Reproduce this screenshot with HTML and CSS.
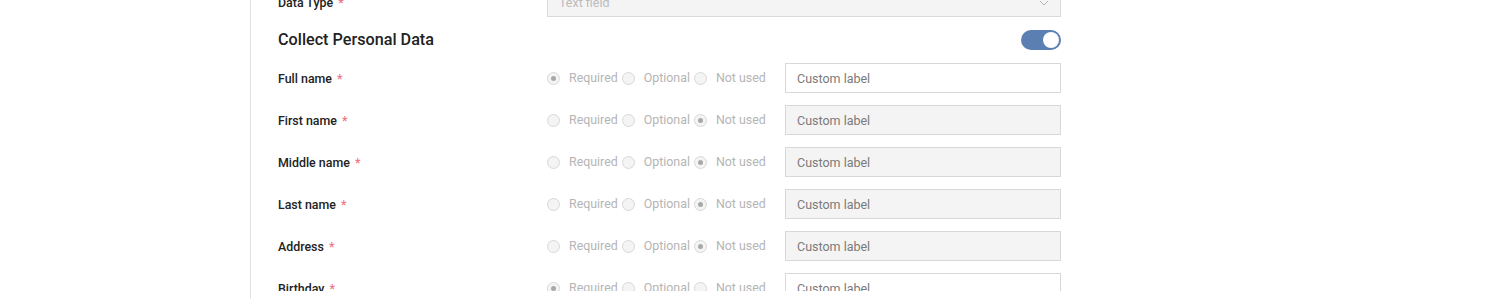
FILE: index.html
```html
<html>
    <head>
        <meta name="viewport" content="width=device-width, initial-scale=1.0">
        <title>Collect Personal Data</title>
        <link rel="stylesheet" href="styles.css">
    </head>
    <body>
        <div class="card">
            <div class="scroller">
                <div class="content">
                    <div class="row">
                        <div class="label">Data Type <span class="req">*</span></div>
                        <div class="select">
                            <span>Text field</span>
                            <svg class="chevron" width="10" height="6" viewBox="0 0 10 6"><path d="M1 1 L5 5 L9 1" fill="none" stroke="#b5b5b5" stroke-width="1"/></svg>
                        </div>
                    </div>
                    <div class="row heading">
                        <h3>Collect Personal Data</h3>
                        <div class="toggle on"><div class="knob"></div></div>
                    </div>

                    <div class="row">
                        <div class="label">Full name <span class="req">*</span></div>
                        <div class="radios">
                            <span class="radio checked"></span><span class="rtext">Required</span>
                            <span class="radio"></span><span class="rtext">Optional</span>
                            <span class="radio"></span><span class="rtext">Not used</span>
                        </div>
                        <input class="custom" type="text" placeholder="Custom label">
                    </div>
                    <div class="row">
                        <div class="label">First name <span class="req">*</span></div>
                        <div class="radios">
                            <span class="radio"></span><span class="rtext">Required</span>
                            <span class="radio"></span><span class="rtext">Optional</span>
                            <span class="radio checked"></span><span class="rtext">Not used</span>
                        </div>
                        <input class="custom" type="text" placeholder="Custom label" disabled>
                    </div>
                    <div class="row">
                        <div class="label">Middle name <span class="req">*</span></div>
                        <div class="radios">
                            <span class="radio"></span><span class="rtext">Required</span>
                            <span class="radio"></span><span class="rtext">Optional</span>
                            <span class="radio checked"></span><span class="rtext">Not used</span>
                        </div>
                        <input class="custom" type="text" placeholder="Custom label" disabled>
                    </div>
                    <div class="row">
                        <div class="label">Last name <span class="req">*</span></div>
                        <div class="radios">
                            <span class="radio"></span><span class="rtext">Required</span>
                            <span class="radio"></span><span class="rtext">Optional</span>
                            <span class="radio checked"></span><span class="rtext">Not used</span>
                        </div>
                        <input class="custom" type="text" placeholder="Custom label" disabled>
                    </div>
                    <div class="row">
                        <div class="label">Address <span class="req">*</span></div>
                        <div class="radios">
                            <span class="radio"></span><span class="rtext">Required</span>
                            <span class="radio"></span><span class="rtext">Optional</span>
                            <span class="radio checked"></span><span class="rtext">Not used</span>
                        </div>
                        <input class="custom" type="text" placeholder="Custom label" disabled>
                    </div>
                    <div class="row">
                        <div class="label">Birthday <span class="req">*</span></div>
                        <div class="radios">
                            <span class="radio checked"></span><span class="rtext">Required</span>
                            <span class="radio"></span><span class="rtext">Optional</span>
                            <span class="radio"></span><span class="rtext">Not used</span>
                        </div>
                        <input class="custom" type="text" placeholder="Custom label">
                    </div>
                </div>
            </div>
        </div>
    </body>
</html>
```

FILE: styles.css
```css
html, body{
    margin: 0px;
    padding: 0px;
    background-color: white;
    font-family: 'Roboto', 'Liberation Sans', sans-serif;
    color: #222;
    overflow: hidden;
}
.card{
    margin-left: 250px;
    height: 299px;
    border-left: 1px solid #e2e2e2;
}
.scroller{
    height: 291px;
    overflow: hidden;
}
.content{
    margin-top: -13px;
    padding-left: 27px;
    width: 783px;
}
.row{
    display: flex;
    align-items: center;
    height: 30px;
    margin-bottom: 12px;
}
.label{
    width: 269px;
    flex: none;
    font-size: 12.4px;
    font-weight: 500;
    color: #222;
}
.req{
    color: #f07585;
    margin-left: 2px;
}
.select{
    flex: 1;
    height: 30px;
    box-sizing: border-box;
    border: 1px solid #dadada;
    background-color: #f4f4f4;
    display: flex;
    align-items: center;
    justify-content: space-between;
    padding: 0 11px;
    font-size: 12.5px;
    color: #bbb;
}
.chevron{
    margin-top: 1px;
}
.heading{
    height: 22px;
    justify-content: space-between;
}
.heading h3{
    margin: 0 0 2px 0;
    font-size: 16.2px;
    font-weight: 500;
    color: #222;
}
.toggle{
    width: 40px;
    height: 20px;
    border-radius: 10px;
    background-color: #d8d8d8;
    display: flex;
    align-items: center;
    padding: 0 2px;
    box-sizing: border-box;
}
.toggle.on{
    background-color: #5b7fb2;
    justify-content: flex-end;
}
.knob{
    width: 16px;
    height: 16px;
    border-radius: 50%;
    background-color: white;
}
.radios{
    width: 238px;
    flex: none;
    display: flex;
    align-items: center;
    font-size: 12.4px;
    color: #b5b5b5;
    margin-top: -2px;
}
.radio{
    width: 13px;
    height: 13px;
    box-sizing: border-box;
    border-radius: 50%;
    border: 1px solid #d8d8d8;
    background-color: #f4f4f4;
    display: inline-flex;
    align-items: center;
    justify-content: center;
    margin-right: 9px;
    margin-top: 2px;
    flex: none;
}
.radio.checked:after{
    content: '';
    width: 5px;
    height: 5px;
    border-radius: 50%;
    background-color: #a8a8a8;
}
.rtext{
    margin-right: 4px;
}
.custom{
    width: 276px;
    height: 30px;
    box-sizing: border-box;
    border: 1px solid #d8d8d8;
    background-color: white;
    padding: 0 11px;
    font-family: 'Roboto', 'Liberation Sans', sans-serif;
    font-size: 12.5px;
    outline: none;
}
.custom::placeholder{
    color: #7a7a7a;
}
.custom:disabled{
    background-color: #f4f4f4;
}
```
